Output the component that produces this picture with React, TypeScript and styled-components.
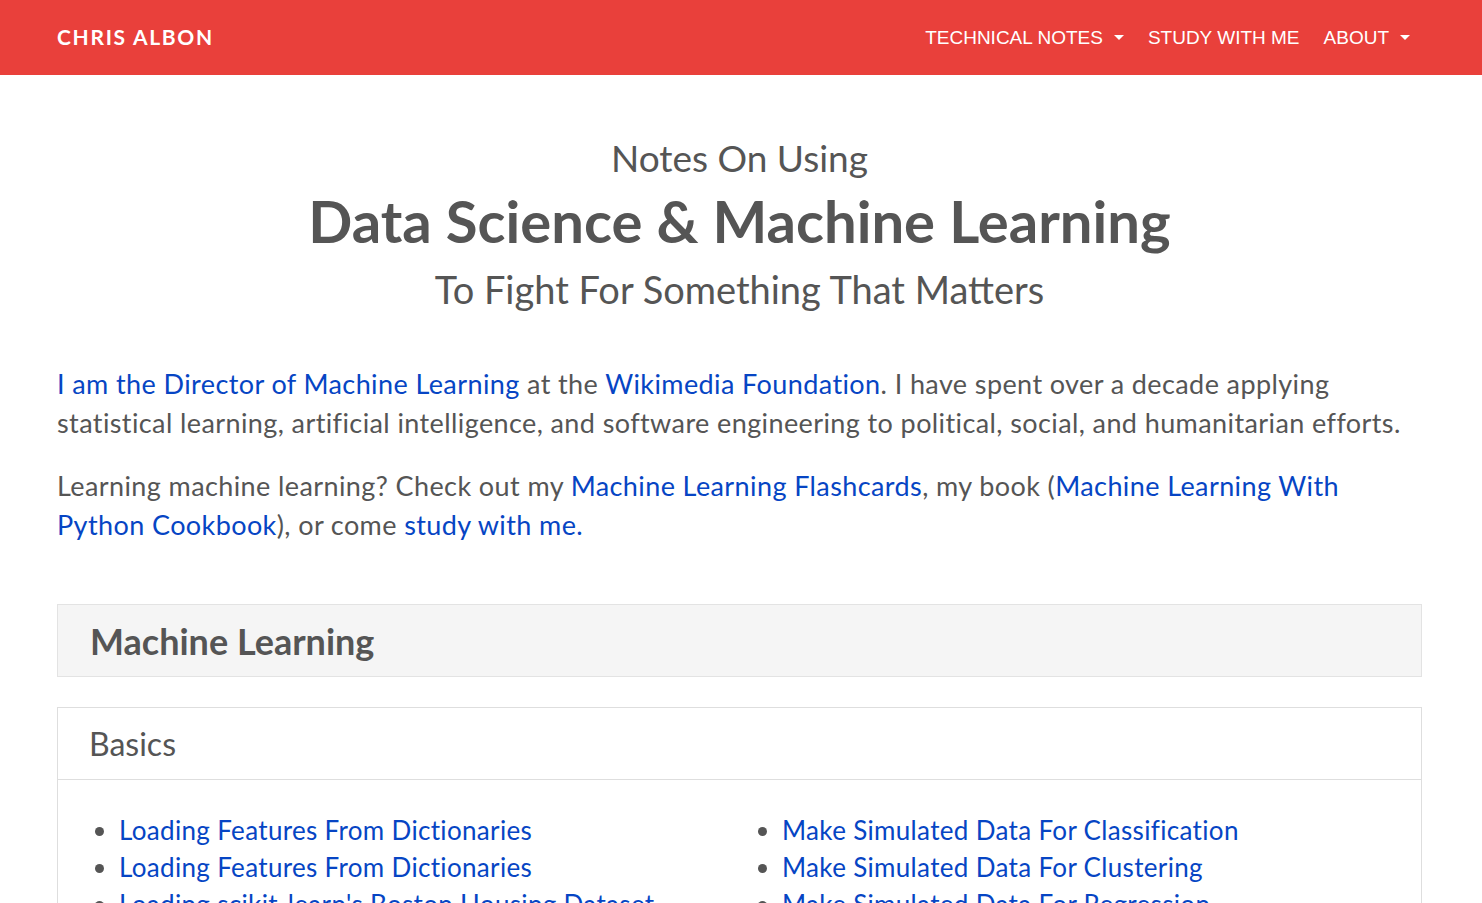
import styled, { createGlobalStyle } from "styled-components";

const GlobalStyle = createGlobalStyle`
  * { box-sizing: border-box; }
  body {
    margin: 0;
    background: #fff;
    color: #555;
    font-family: Lato, "Open Sans", sans-serif;
  }
`;

const basicsLeft = [
  "Loading Features From Dictionaries",
  "Loading Features From Dictionaries",
  "Loading scikit-learn's Boston Housing Dataset",
];

const basicsRight = [
  "Make Simulated Data For Classification",
  "Make Simulated Data For Clustering",
  "Make Simulated Data For Regression",
];

export default function App() {
  return (
    <>
      <GlobalStyle />
      <Navbar>
        <Brand href="#">CHRIS ALBON</Brand>
        <NavList>
          <NavItem>
            <NavLink href="#" $caret>TECHNICAL NOTES</NavLink>
          </NavItem>
          <NavItem>
            <NavLink href="#">STUDY WITH ME</NavLink>
          </NavItem>
          <NavItem>
            <NavLink href="#" $caret>ABOUT</NavLink>
          </NavItem>
        </NavList>
      </Navbar>

      <Main>
        <Hero>
          <Kicker>Notes On Using</Kicker>
          <HeroTitle>Data Science &amp; Machine Learning</HeroTitle>
          <Tagline>To Fight For Something That Matters</Tagline>
        </Hero>

        <Intro>
          <A href="#">I am the Director of Machine Learning</A> at the{" "}
          <A href="#">Wikimedia Foundation</A>. I have spent over a decade applying
          statistical learning, artificial intelligence, and software engineering to
          political, social, and humanitarian efforts.
        </Intro>
        <Intro>
          Learning machine learning? Check out my{" "}
          <A href="#">Machine Learning Flashcards</A>, my book (
          <A href="#">Machine Learning With Python Cookbook</A>), or come{" "}
          <A href="#">study with me.</A>
        </Intro>

        <SectionHeader>Machine Learning</SectionHeader>

        <Card>
          <CardHeader>Basics</CardHeader>
          <CardBody>
            <LinkList>
              {basicsLeft.map((t, i) => (
                <li key={i}>
                  <A href="#">{t}</A>
                </li>
              ))}
            </LinkList>
            <LinkList>
              {basicsRight.map((t, i) => (
                <li key={i}>
                  <A href="#">{t}</A>
                </li>
              ))}
            </LinkList>
          </CardBody>
        </Card>
      </Main>
    </>
  );
}

const Navbar = styled.nav`
  height: 75px;
  background: #e9403b;
  display: flex;
  align-items: center;
  justify-content: space-between;
  padding: 0 57px;
`;

const Brand = styled.a`
  color: #fff;
  text-decoration: none;
  font-family: Lato, sans-serif;
  font-weight: 700;
  font-size: 21px;
  letter-spacing: 1.7px;
  margin-top: -2px;
`;

const NavList = styled.ul`
  list-style: none;
  margin: 0 15px 0 0;
  padding: 0;
  display: flex;
  gap: 24px;
`;

const NavItem = styled.li``;

const NavLink = styled.a<{ $caret?: boolean }>`
  color: #fff;
  text-decoration: none;
  font-family: "Liberation Sans", Arial, sans-serif;
  font-size: 19px;
  display: inline-flex;
  align-items: center;

  ${({ $caret }) =>
    $caret &&
    `
    &::after {
      content: "";
      margin-left: 11px;
      border-top: 5px solid #fff;
      border-left: 5px solid transparent;
      border-right: 5px solid transparent;
    }
  `}
`;

const Main = styled.main`
  padding: 0 60px 0 57px;
`;

const Hero = styled.header`
  text-align: center;
  padding-top: 56px;
  padding-bottom: 48px;
`;

const Kicker = styled.p`
  margin: 0;
  font-size: 37px;
  font-weight: 400;
  line-height: 54px;
  color: #555;
`;

const Tagline = styled(Kicker)`
  font-size: 38px;
`;

const HeroTitle = styled.h1`
  margin: 2px 0 7px;
  font-size: 58px;
  font-weight: 700;
  line-height: 68px;
  color: #555;
`;

const Intro = styled.p`
  margin: 0 0 24px;
  font-size: 27px;
  letter-spacing: 0.4px;
  line-height: 39px;
  color: #555;
`;

const A = styled.a`
  color: #0645c4;
  text-decoration: none;
`;

const SectionHeader = styled.h2`
  margin: 60px 0 30px;
  height: 73px;
  display: flex;
  align-items: center;
  padding: 0 32px;
  background: #f5f5f5;
  border: 1px solid #e3e3e3;
  font-size: 36px;
  font-weight: 700;
  color: #555;
`;

const Card = styled.section`
  border: 1px solid #dedede;
  border-bottom: none;
`;

const CardHeader = styled.h3`
  margin: 0;
  height: 72px;
  display: flex;
  align-items: center;
  padding: 0 31px;
  border-bottom: 1px solid #dedede;
  font-size: 32px;
  font-weight: 400;
  color: #555;
`;

const CardBody = styled.div`
  display: grid;
  grid-template-columns: 663px 1fr;
  padding: 32px 31px 0;
`;

const LinkList = styled.ul`
  margin: 0;
  padding-left: 30px;
  font-size: 26px;
  letter-spacing: 0.33px;
  line-height: 37px;
  color: #555;
`;
